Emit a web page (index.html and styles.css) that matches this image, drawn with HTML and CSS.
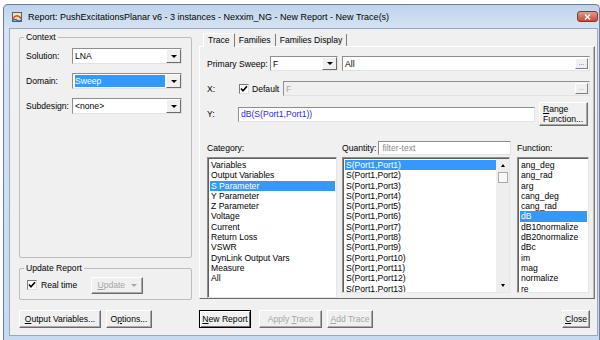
FILE: index.html
```html
<!DOCTYPE html>
<html lang="en">
<head>
  <meta charset="UTF-8" />
  <title>Report: PushExcitationsPlanar v6</title>
  <link rel="stylesheet" href="styles.css">
</head>
<body>
  <div class="window">
    <div class="titlebar">
      <svg class="app-icon" width="10" height="10" viewBox="0 0 10 10">
        <rect x="0.5" y="0.5" width="9" height="9" fill="#f4e6a2" stroke="#4f5f80"/>
        <path d="M1 6.5 Q5 1 9 6.5" stroke="#e2441c" stroke-width="1.6" fill="none"/>
        <path d="M1 8.3 Q3 6.8 5 8.3 T9 8.3" stroke="#2a62c4" stroke-width="1.4" fill="none"/>
      </svg>
      <span class="title">Report: PushExcitationsPlanar v6 - 3 instances - Nexxim_NG - New Report - New Trace(s)</span>
      <div class="close-btn">
        <svg width="7" height="6" viewBox="0 0 7 6"><path d="M1 0.5 L6 5.5 M6 0.5 L1 5.5" stroke="#fff" stroke-width="1.4"/></svg>
      </div>
    </div>

    <div class="client">
      <div class="left-col">
        <fieldset class="group context">
          <legend>Context</legend>
          <div class="field-row">
            <span class="field-label">Solution:</span>
            <div class="combo"><span class="combo-text">LNA</span><span class="combo-btn"></span></div>
          </div>
          <div class="field-row">
            <span class="field-label">Domain:</span>
            <div class="combo"><span class="combo-text selected">Sweep</span><span class="combo-btn"></span></div>
          </div>
          <div class="field-row">
            <span class="field-label">Subdesign:</span>
            <div class="combo"><span class="combo-text">&lt;none&gt;</span><span class="combo-btn"></span></div>
          </div>
        </fieldset>

        <fieldset class="group update">
          <legend>Update Report</legend>
          <div class="update-row">
            <span class="checkbox">
              <svg width="8" height="8" viewBox="0 0 8 8"><path d="M1 3.5 L3 5.8 L7 1.2" stroke="#000" stroke-width="1.6" fill="none"/></svg>
            </span>
            <span class="check-text">Real time</span>
            <span class="btn disabled update-btn"><span><u>U</u>pdate</span><span class="tri gray"></span></span>
          </div>
        </fieldset>

        <div class="button-row">
          <span class="btn output-btn"><span><u>O</u>utput Variables...</span></span>
          <span class="btn options-btn"><span>O<u>p</u>tions...</span></span>
        </div>
      </div>

      <div class="right-col">
        <div class="tabs">
          <span class="tab active">Trace</span>
          <span class="tab">Families</span>
          <span class="tab">Families Display</span>
        </div>

        <div class="tab-panel">
          <div class="panel-row sweep-row">
            <span class="sweep-label">Primary Sweep:</span>
            <div class="combo small"><span class="combo-text">F</span><span class="combo-btn"></span></div>
            <div class="text-field wide"><span class="field-text">All</span><span class="dots">...</span></div>
          </div>

          <div class="panel-row x-row">
            <span class="axis-label">X:</span>
            <span class="checkbox">
              <svg width="8" height="8" viewBox="0 0 8 8"><path d="M1 3.5 L3 5.8 L7 1.2" stroke="#000" stroke-width="1.6" fill="none"/></svg>
            </span>
            <span class="default-text">Default</span>
            <div class="text-field wide disabled"><span class="field-text">F</span><span class="dots">...</span></div>
          </div>

          <div class="panel-row y-row">
            <span class="axis-label">Y:</span>
            <div class="text-field expr"><span class="field-text">dB(S(Port1,Port1))</span></div>
            <span class="btn range-btn"><span><u>R</u>ange<br>Function...</span></span>
          </div>

          <div class="lists">
            <div class="list-col category">
              <div class="list-head">Category:</div>
              <div class="listbox">
                <div class="item">Variables</div>
                <div class="item">Output Variables</div>
                <div class="item selected">S Parameter</div>
                <div class="item">Y Parameter</div>
                <div class="item">Z Parameter</div>
                <div class="item">Voltage</div>
                <div class="item">Current</div>
                <div class="item">Return Loss</div>
                <div class="item">VSWR</div>
                <div class="item">DynLink Output Vars</div>
                <div class="item">Measure</div>
                <div class="item">All</div>
              </div>
            </div>

            <div class="list-col quantity">
              <div class="list-head">
                <span>Quantity:</span>
                <span class="filter">filter-text</span>
              </div>
              <div class="listbox scrolled">
                <div class="list-items">
                  <div class="item selected">S(Port1,Port1)</div>
                  <div class="item">S(Port1,Port2)</div>
                  <div class="item">S(Port1,Port3)</div>
                  <div class="item">S(Port1,Port4)</div>
                  <div class="item">S(Port1,Port5)</div>
                  <div class="item">S(Port1,Port6)</div>
                  <div class="item">S(Port1,Port7)</div>
                  <div class="item">S(Port1,Port8)</div>
                  <div class="item">S(Port1,Port9)</div>
                  <div class="item">S(Port1,Port10)</div>
                  <div class="item">S(Port1,Port11)</div>
                  <div class="item">S(Port1,Port12)</div>
                  <div class="item">S(Port1,Port13)</div>
                </div>
                <div class="scrollbar">
                  <span class="tri up"></span>
                  <span class="thumb"></span>
                  <span class="tri down"></span>
                </div>
              </div>
            </div>

            <div class="list-col function">
              <div class="list-head">Function:</div>
              <div class="listbox">
                <div class="item">ang_deg</div>
                <div class="item">ang_rad</div>
                <div class="item">arg</div>
                <div class="item">cang_deg</div>
                <div class="item">cang_rad</div>
                <div class="item selected">dB</div>
                <div class="item">dB10normalize</div>
                <div class="item">dB20normalize</div>
                <div class="item">dBc</div>
                <div class="item">im</div>
                <div class="item">mag</div>
                <div class="item">normalize</div>
                <div class="item">re</div>
              </div>
            </div>
          </div>
        </div>

        <div class="button-row">
          <span class="btn default-btn"><span><u>N</u>ew Report</span></span>
          <span class="btn disabled apply-btn"><span>Apply <u>T</u>race</span></span>
          <span class="btn disabled add-btn"><span><u>A</u>dd Trace</span></span>
          <span class="btn close-dlg"><span><u>C</u>lose</span></span>
        </div>
      </div>
    </div>
  </div>
</body>
</html>
```

FILE: styles.css
```css
body {
  margin: 0;
  background: #fff;
  font-family: "Liberation Sans", Arial, sans-serif;
  font-size: 8.6px;
  color: #000;
}

.window {
  margin: 4px 0 0 3px;
  width: 597px;
  height: 336px;
  box-sizing: border-box;
  border: 1px solid #6d7f98;
  border-bottom: none;
  border-radius: 5px 5px 0 0;
  background: linear-gradient(#bfd3ec, #d6e4f4 24px, #c8daf0);
  display: flex;
  flex-direction: column;
  overflow: hidden;
}

.titlebar {
  height: 23px;
  display: flex;
  align-items: center;
  padding-left: 8px;
}

.app-icon {
  margin-right: 6px;
}

.title {
  font-size: 9px;
  color: #000;
}

.close-btn {
  margin-left: auto;
  margin-right: 1px;
  width: 21px;
  height: 11px;
  box-sizing: border-box;
  border: 1px solid #8b3327;
  border-radius: 3px;
  background: linear-gradient(#e49a8c, #c74a37);
  display: flex;
  align-items: center;
  justify-content: center;
}

.client {
  flex: 1;
  margin: 0 1px 4px 5px;
  background: #f0f0f0;
  border: 1px solid #95a8c2;
  display: flex;
  gap: 7px;
  padding: 3px 2px 0 9px;
}

/* left column */
.left-col {
  width: 173px;
  display: flex;
  flex-direction: column;
}

.group {
  margin: 0;
  padding: 0 6px;
  border: 1px solid #bdbdbd;
  border-radius: 2px;
  box-sizing: border-box;
  min-width: 0;
}

.group legend {
  padding: 0 2px;
  margin-left: -2px;
  line-height: 10px;
  color: #000;
}

.context {
  height: 226px;
  padding-top: 6px;
  display: flex;
  flex-direction: column;
  gap: 9px;
}

.field-row {
  display: flex;
  align-items: center;
}

.field-label {
  width: 46px;
}

.combo {
  width: 110px;
  height: 16px;
  box-sizing: border-box;
  background: #fff;
  border: 1px solid;
  border-color: #8e8e8e #e2e2e2 #e2e2e2 #8e8e8e;
  display: flex;
}

.combo.small {
  width: 68px;
  height: 15px;
}

.combo-text {
  flex: 1;
  padding-left: 2px;
  display: flex;
  align-items: center;
}

.combo-text.selected {
  margin: 1px 1px 1px 2px;
  padding-left: 0;
  background: #3399ff;
  color: #fff;
}

.combo-btn {
  width: 13px;
  background: #f0f0f0;
  border: 1px solid;
  border-color: #fff #6b6b6b #6b6b6b #fff;
  display: flex;
  align-items: center;
  justify-content: center;
}

.combo-btn::after,
.tri {
  content: "";
  width: 0;
  height: 0;
  border-left: 3px solid transparent;
  border-right: 3px solid transparent;
  border-top: 3px solid #000;
}

.tri.gray {
  border-top-color: #a8a8a8;
  margin-left: 6px;
}

.update {
  height: 37px;
  margin-top: 5px;
  padding-top: 4px;
}

.update-row {
  display: flex;
  align-items: center;
  height: 16px;
  padding-left: 1px;
}

.checkbox {
  width: 10px;
  height: 10px;
  box-sizing: border-box;
  background: #fff;
  border: 1px solid;
  border-color: #7a7a7a #e0e0e0 #e0e0e0 #7a7a7a;
  display: flex;
  align-items: center;
  justify-content: center;
}

.check-text {
  margin-left: 4px;
}

.btn {
  height: 18px;
  box-sizing: border-box;
  background: #f0f0f0;
  border: 1px solid;
  border-color: #fff #6b6b6b #6b6b6b #fff;
  box-shadow: inset -1px -1px 0 #a9a9a9;
  display: inline-flex;
  align-items: center;
  justify-content: center;
  white-space: nowrap;
}

.btn.disabled {
  color: #a6a6a6;
}

.update-btn {
  height: 17px;
  width: 52px;
  margin-left: 14px;
}

.button-row {
  display: flex;
  gap: 5px;
  margin-top: 10px;
}

.output-btn {
  width: 82px;
}

.options-btn {
  width: 46px;
}

/* right column */
.right-col {
  flex: 1;
  display: flex;
  flex-direction: column;
}

.tabs {
  display: flex;
  height: 14px;
  padding-left: 4px;
  align-items: flex-end;
}

.tab {
  height: 12px;
  line-height: 12px;
  padding: 0 4px;
  border-right: 1px solid #7c7c7c;
}

.tab.active {
  height: 14px;
  line-height: 13px;
  border-top: 1px solid #fff;
  border-left: 1px solid #fff;
  box-sizing: border-box;
  background: #f0f0f0;
  margin-bottom: -1px;
  position: relative;
}

.tab-panel {
  height: 253px;
  box-sizing: border-box;
  border: 1px solid;
  border-color: #fff #7c7c7c #6b6b6b #fff;
  box-shadow: inset -1px 0 0 #b8b8b8;
  padding: 9px 4px 0 7px;
}

.panel-row {
  display: flex;
  align-items: center;
}

.sweep-row {
  height: 15px;
}

.sweep-label {
  width: 63px;
}

.text-field {
  height: 15px;
  box-sizing: border-box;
  background: #fff;
  border: 1px solid;
  border-color: #8e8e8e #e2e2e2 #e2e2e2 #8e8e8e;
  display: flex;
  align-items: center;
}

.text-field.wide {
  flex: 1;
  margin-left: 4px;
}

.text-field.disabled {
  background: #f0f0f0;
  color: #a6a6a6;
}

.field-text {
  flex: 1;
  padding-left: 2px;
}

.dots {
  width: 13px;
  height: 11px;
  margin-right: 1px;
  box-sizing: border-box;
  border: 1px solid;
  border-color: #fff #7c7c7c #7c7c7c #fff;
  background: #f0f0f0;
  color: #5a4fd6;
  font-size: 7px;
  line-height: 8px;
  text-align: center;
}

.disabled .dots {
  color: #a6a6a6;
}

.x-row {
  height: 15px;
  margin-top: 10px;
}

.axis-label {
  width: 32px;
}

.default-text {
  margin-left: 3px;
  width: 28px;
}

.text-field.disabled.wide {
  margin-left: 3px;
}

.y-row {
  height: 24px;
  margin-top: 6px;
}

.y-row .axis-label {
  width: 31px;
}

.text-field.expr {
  width: 297px;
  color: #2b2bd8;
}

.range-btn {
  height: 24px;
  width: 49px;
  margin-left: 4px;
  justify-content: flex-start;
  padding-left: 3px;
  line-height: 10px;
}

.lists {
  display: flex;
  margin-top: 15px;
}

.list-col {
  display: flex;
  flex-direction: column;
}

.list-head {
  height: 14px;
  display: flex;
  align-items: center;
  margin-bottom: 2px;
}

.category {
  width: 130px;
}

.quantity {
  width: 169px;
  margin-left: 5px;
}

.function {
  width: 72px;
  margin-left: 6px;
}

.filter {
  flex: 1;
  margin-left: 2px;
  height: 14px;
  box-sizing: border-box;
  background: #fff;
  border: 1px solid;
  border-color: #8e8e8e #e2e2e2 #e2e2e2 #8e8e8e;
  color: #8a8a8a;
  padding-left: 3px;
  display: flex;
  align-items: center;
}

.listbox {
  height: 136px;
  box-sizing: border-box;
  background: #fff;
  border: 1px solid;
  border-color: #8e8e8e #e6e6e6 #e6e6e6 #8e8e8e;
  box-shadow: inset 1px 1px 0 #5f5f5f;
  padding: 2px 1px 0 2px;
  overflow: hidden;
}

.category .listbox {
  height: 141px;
  width: 130px;
}

.quantity .listbox {
  width: 168px;
}

.item {
  height: 10.3px;
  line-height: 10.3px;
  padding-left: 1px;
  white-space: nowrap;
}

.item.selected {
  background: #3399ff;
  color: #fff;
}

.listbox.scrolled {
  display: flex;
  padding-right: 0;
}

.list-items {
  flex: 1;
}

.scrollbar {
  width: 13px;
  margin-top: -1px;
  background: #eeeeee;
  display: flex;
  flex-direction: column;
  align-items: center;
}

.tri.up {
  border-top: none;
  border-bottom: 3px solid #000;
  border-left-width: 2px;
  border-right-width: 2px;
  margin-top: 5px;
}

.thumb {
  width: 10px;
  height: 11px;
  margin-top: 5px;
  box-sizing: border-box;
  background: #f8f8f8;
  border: 1px solid #a8a8a8;
}

.tri.down {
  margin-top: auto;
  margin-bottom: 5px;
  border-left-width: 2px;
  border-right-width: 2px;
}

.right-col .button-row {
  margin-top: 11px;
  gap: 0;
}

.default-btn {
  width: 52px;
  border: 1px solid #000;
  box-shadow: inset 1px 1px 0 #fff, inset -1px -1px 0 #6b6b6b;
}

.apply-btn {
  width: 63px;
  margin-left: 8px;
}

.add-btn {
  width: 46px;
  margin-left: 5px;
}

.close-dlg {
  width: 28px;
  margin-left: auto;
  margin-right: 5px;
}
```
